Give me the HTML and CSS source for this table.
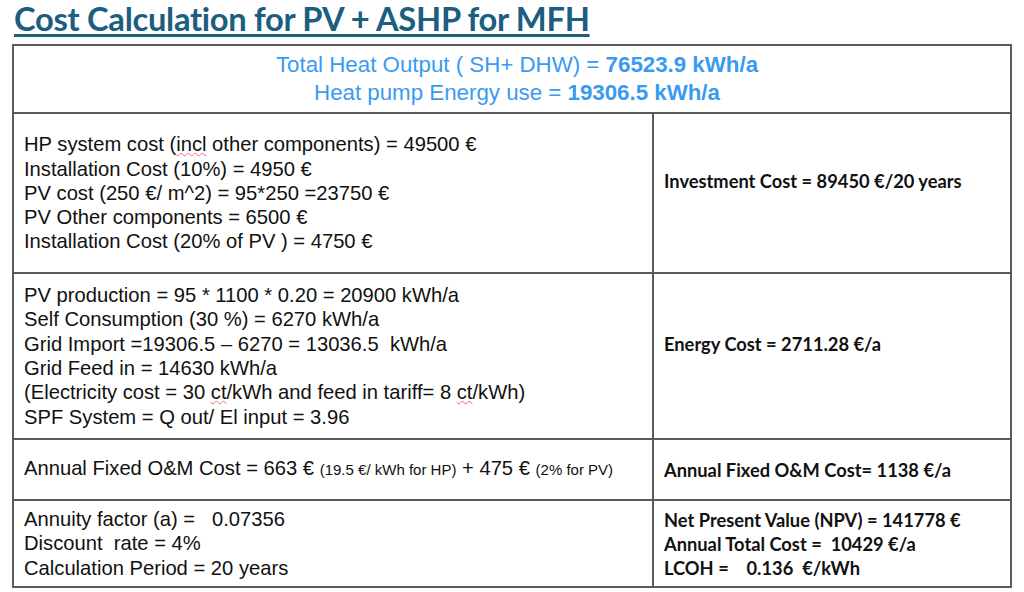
FILE: index.html
```html
<!DOCTYPE html>
<html lang="en">
<head>
<meta charset="utf-8">
<title>Cost Calculation for PV + ASHP for MFH</title>
<link rel="stylesheet" href="styles.css">
</head>
<body>
<div class="page">
  <header class="head">
    <h1 class="title">Cost Calculation for PV + ASHP for MFH</h1>
  </header>
  <table class="calc">
    <colgroup><col class="c-left"><col class="c-right"></colgroup>
    <tr class="r-head">
      <td colspan="2" class="summary">
        <div>Total Heat Output ( SH+ DHW) = <b>76523.9 kWh/a</b></div>
        <div>Heat pump Energy use = <b>19306.5 kWh/a</b></div>
      </td>
    </tr>
    <tr class="r-invest">
      <td class="detail">
        <div>HP system cost (<span class="spell">incl</span> other components) = 49500 €</div>
        <div>Installation Cost (10%) = 4950 €</div>
        <div>PV cost (250 €/ m^2) = 95*250 =23750 €</div>
        <div>PV Other components = 6500 €</div>
        <div>Installation Cost (20% of PV ) = 4750 €</div>
      </td>
      <td class="result lift">Investment Cost = 89450 €/20 years</td>
    </tr>
    <tr class="r-energy">
      <td class="detail">
        <div>PV production = 95 * 1100 * 0.20 = 20900 kWh/a</div>
        <div>Self Consumption (30 %) = 6270 kWh/a</div>
        <div>Grid Import =19306.5 – 6270 = 13036.5&nbsp; kWh/a</div>
        <div>Grid Feed in = 14630 kWh/a</div>
        <div>(Electricity cost = 30 <span class="spell">ct</span>/kWh and feed in tariff= 8 <span class="spell">ct</span>/kWh)</div>
        <div>SPF System = Q out/ El input = 3.96</div>
      </td>
      <td class="result lift">Energy Cost = 2711.28 €/a</td>
    </tr>
    <tr class="r-om">
      <td class="detail">
        <div>Annual Fixed O&amp;M Cost = 663 € <small>(19.5 €/ kWh for HP)</small> + 475 € <small>(2% for PV)</small></div>
      </td>
      <td class="result">Annual Fixed O&amp;M Cost= 1138 €/a</td>
    </tr>
    <tr class="r-total">
      <td class="detail">
        <div>Annuity factor (a) = &nbsp; 0.07356</div>
        <div>Discount&nbsp; rate = 4%</div>
        <div>Calculation Period = 20 years</div>
      </td>
      <td class="result">
        <div>Net Present Value (NPV) = 141778 €</div>
        <div>Annual Total Cost = &nbsp;10429 €/a</div>
        <div>LCOH = &nbsp;&nbsp; 0.136 &nbsp;€/kWh</div>
      </td>
    </tr>
  </table>
</div>
</body>
</html>
```
FILE: styles.css
```css
html, body {
  margin: 0;
  padding: 0;
  background: #ffffff;
}
body {
  font-family: "Liberation Sans", Arial, sans-serif;
  color: #111111;
}
.page {
  width: 1024px;
  height: 592px;
  overflow: hidden;
}
.head {
  height: 44px;
  padding-left: 14px;
  padding-top: 2px;
  box-sizing: border-box;
}
.title {
  margin: 0;
  font-family: "Lato", "Open Sans", sans-serif;
  font-weight: 700;
  font-size: 32.7px;
  line-height: 34px;
  color: #1b5e80;
  text-decoration: underline;
  text-decoration-thickness: 3px;
  text-underline-offset: 3px;
  letter-spacing: -0.3px;
}
.calc {
  margin-left: 12px;
  width: 998px;
  border-collapse: collapse;
  table-layout: fixed;
}
.c-left { width: 640px; }
.c-right { width: 358px; }
.calc td {
  border: 2px solid #5a5a5a;
  vertical-align: middle;
  padding: 0 0 0 10px;
}
.r-head { height: 68px; }
.r-invest { height: 160px; }
.r-energy { height: 166px; }
.r-om { height: 61px; }
.r-total { height: 87px; }
.summary {
  text-align: center;
  color: #3a9af2;
  font-size: 22.3px;
  line-height: 28px;
  padding: 0 0 8px 0;
}
.summary b {
  font-weight: 700;
}
.detail {
  font-size: 20.2px;
  line-height: 24.3px;
  color: #111111;
}
.detail small {
  font-size: 15px;
}
.spell {
  text-decoration: underline wavy #e87070;
  text-decoration-thickness: 1px;
  text-underline-offset: 1px;
}
.result {
  font-family: "Lato", "Open Sans", sans-serif;
  font-weight: 700;
  font-size: 18.3px;
  line-height: 24px;
  color: #111111;
}
.result.lift {
  padding-bottom: 24px;
}
```
